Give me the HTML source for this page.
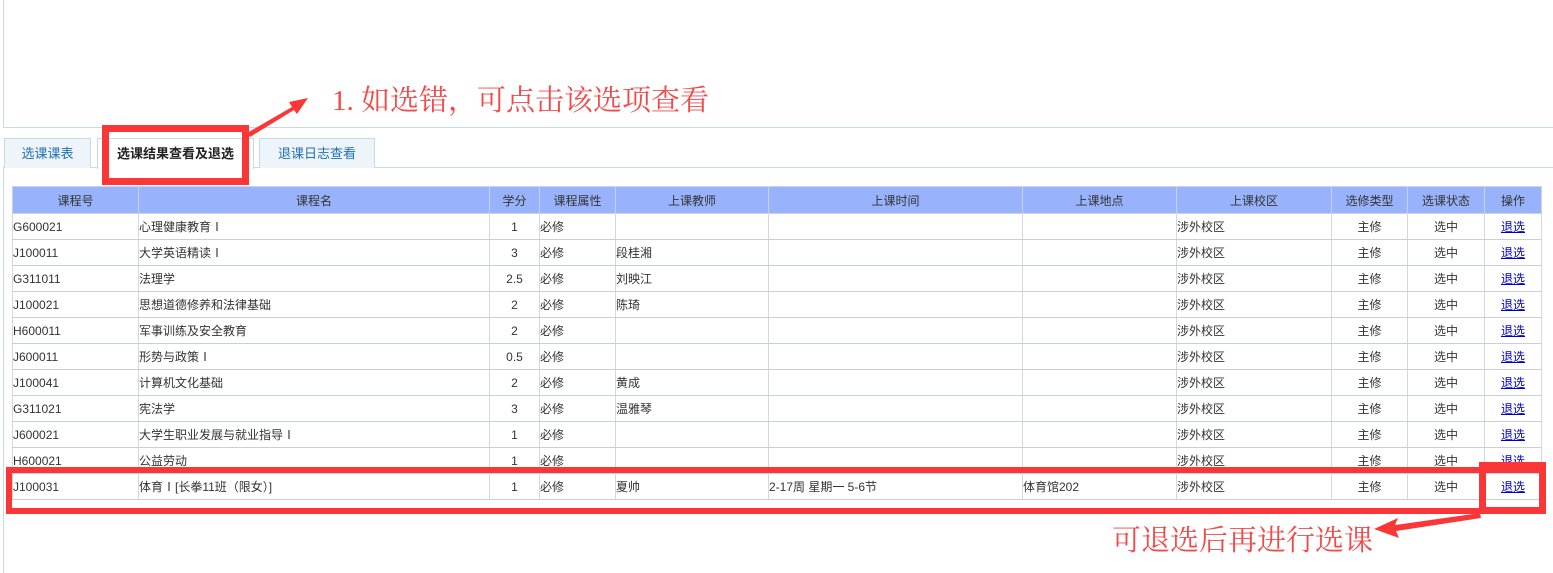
<!DOCTYPE html>
<html style="overflow:hidden;height:573px"><head><meta charset="utf-8"><style>
*{margin:0;padding:0;box-sizing:border-box}
body{width:1553px;height:573px;background:#fff;position:relative;overflow:hidden;font-family:"Liberation Sans","Noto Sans CJK SC",sans-serif;font-size:12px;color:#333}
.abs{position:absolute}
.tab{position:absolute;top:138px;height:30px;border:1px solid #c5dbe8;border-bottom:none;background:#eef5fa;color:#1f6fb4;font-size:13px;line-height:30px;text-align:center}
table{position:absolute;left:12px;top:186px;width:1529px;border-collapse:collapse;table-layout:fixed}
td,th{border:1px solid #c6cfdb;height:26px;padding:0;white-space:nowrap;overflow:hidden;font-weight:normal}
th{background:#98b2fb;height:27px;color:#333;font-size:12px;border-color:#c8d2e6}
td{border-left-color:#d7d7d7;border-right-color:#d7d7d7}
.c{text-align:center}
a{color:#00c;text-decoration:underline}
.red{position:absolute;border:6px solid #fb3636}
.ann{position:absolute;color:#f14a4a;font-size:29px;font-family:"Liberation Serif","Noto Serif CJK SC",serif;white-space:nowrap}
</style></head><body>
<div class="abs" style="left:3px;top:-1px;width:1560px;height:129px;border:1px solid #c5dbe8"></div>
<div class="abs" style="left:3px;top:167px;width:1550px;height:406px;border-left:1px solid #c5dbe8;border-top:1px solid #c5dbe8"></div>
<div class="tab" style="left:4px;width:87px">选课课表</div>
<div class="tab" style="left:97px;width:157px;background:#fff;height:31px;color:#222;font-weight:bold">选课结果查看及退选</div>
<div class="tab" style="left:259px;width:116px">退课日志查看</div>
<table>
<colgroup><col style="width:126px"><col style="width:351px"><col style="width:50px"><col style="width:76px"><col style="width:153px"><col style="width:254px"><col style="width:154px"><col style="width:155px"><col style="width:76px"><col style="width:77px"><col style="width:57px"></colgroup>
<tr><th>课程号</th><th>课程名</th><th>学分</th><th>课程属性</th><th>上课教师</th><th>上课时间</th><th>上课地点</th><th>上课校区</th><th>选修类型</th><th>选课状态</th><th>操作</th></tr>
<tr><td>G600021</td><td>心理健康教育Ⅰ</td><td class="c">1</td><td>必修</td><td></td><td></td><td></td><td>涉外校区</td><td class="c">主修</td><td class="c">选中</td><td class="c"><a>退选</a></td></tr>
<tr><td>J100011</td><td>大学英语精读Ⅰ</td><td class="c">3</td><td>必修</td><td>段桂湘</td><td></td><td></td><td>涉外校区</td><td class="c">主修</td><td class="c">选中</td><td class="c"><a>退选</a></td></tr>
<tr><td>G311011</td><td>法理学</td><td class="c">2.5</td><td>必修</td><td>刘映江</td><td></td><td></td><td>涉外校区</td><td class="c">主修</td><td class="c">选中</td><td class="c"><a>退选</a></td></tr>
<tr><td>J100021</td><td>思想道德修养和法律基础</td><td class="c">2</td><td>必修</td><td>陈琦</td><td></td><td></td><td>涉外校区</td><td class="c">主修</td><td class="c">选中</td><td class="c"><a>退选</a></td></tr>
<tr><td>H600011</td><td>军事训练及安全教育</td><td class="c">2</td><td>必修</td><td></td><td></td><td></td><td>涉外校区</td><td class="c">主修</td><td class="c">选中</td><td class="c"><a>退选</a></td></tr>
<tr><td>J600011</td><td>形势与政策Ⅰ</td><td class="c">0.5</td><td>必修</td><td></td><td></td><td></td><td>涉外校区</td><td class="c">主修</td><td class="c">选中</td><td class="c"><a>退选</a></td></tr>
<tr><td>J100041</td><td>计算机文化基础</td><td class="c">2</td><td>必修</td><td>黄成</td><td></td><td></td><td>涉外校区</td><td class="c">主修</td><td class="c">选中</td><td class="c"><a>退选</a></td></tr>
<tr><td>G311021</td><td>宪法学</td><td class="c">3</td><td>必修</td><td>温雅琴</td><td></td><td></td><td>涉外校区</td><td class="c">主修</td><td class="c">选中</td><td class="c"><a>退选</a></td></tr>
<tr><td>J600021</td><td>大学生职业发展与就业指导Ⅰ</td><td class="c">1</td><td>必修</td><td></td><td></td><td></td><td>涉外校区</td><td class="c">主修</td><td class="c">选中</td><td class="c"><a>退选</a></td></tr>
<tr><td>H600021</td><td>公益劳动</td><td class="c">1</td><td>必修</td><td></td><td></td><td></td><td>涉外校区</td><td class="c">主修</td><td class="c">选中</td><td class="c"><a>退选</a></td></tr>
<tr><td>J100031</td><td>体育Ⅰ[长拳11班（限女）]</td><td class="c">1</td><td>必修</td><td>夏帅</td><td>2-17周 星期一 5-6节</td><td>体育馆202</td><td>涉外校区</td><td class="c">主修</td><td class="c">选中</td><td class="c"><a>退选</a></td></tr>
</table>
<div class="red" style="left:102px;top:125px;width:147px;height:60px;border-width:7px"></div>
<div class="red" style="left:6px;top:467px;width:1540px;height:47px"></div>
<div class="red" style="left:1479px;top:462px;width:67px;height:52px;border-width:7px"></div>
<svg class="abs" style="left:0;top:0" width="1553" height="573">
<path d="M247 133 L292 107 L289 102 L308 98 L297 114 L294 110 L250 137 Z" fill="#fb3636"/>
<path d="M1480 513 L1395 525 L1398 518 L1374 529 L1399 538 L1396 531 L1481 518 Z" fill="#fb3636"/>
</svg>
<div class="ann" style="left:332px;top:78px">1. 如选错，可点击该选项查看</div>
<div class="ann" style="left:1112px;top:518px">可退选后再进行选课</div>
</body></html>
